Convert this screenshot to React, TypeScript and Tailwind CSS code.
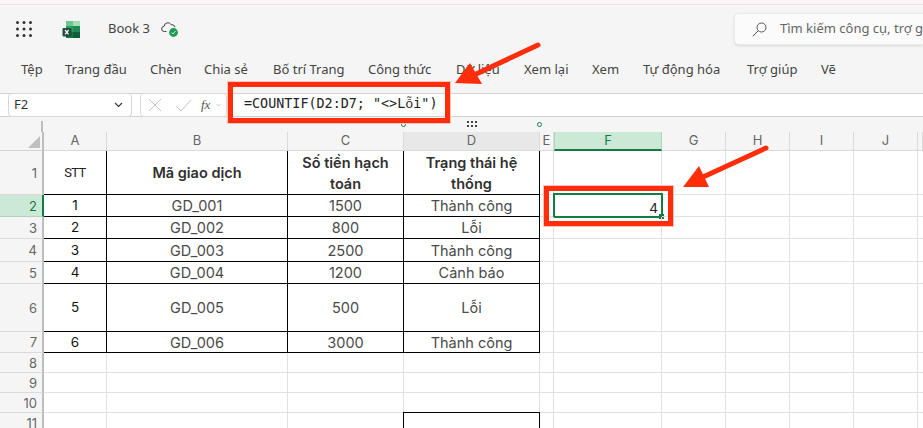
import React from "react";

const colW = [63, 181, 116, 136, 14, 108, 64, 64, 64, 64, 5];
const colN = ["A", "B", "C", "D", "E", "F", "G", "H", "I", "J", ""];
const rowH = [44, 22, 22, 23, 22, 48, 21, 20, 20, 20, 20];

const data: Record<number, string[]> = {
  1: ["STT", "Mã giao dịch", "Số tiền hạch toán", "Trạng thái hệ thống"],
  2: ["1", "GD_001", "1500", "Thành công"],
  3: ["2", "GD_002", "800", "Lỗi"],
  4: ["3", "GD_003", "2500", "Thành công"],
  5: ["4", "GD_004", "1200", "Cảnh báo"],
  6: ["5", "GD_005", "500", "Lỗi"],
  7: ["6", "GD_006", "3000", "Thành công"],
};

const menu = [
  { t: "Tệp", c: "w-[44px]" },
  { t: "Trang đầu", c: "w-[85px]" },
  { t: "Chèn", c: "w-[54px]" },
  { t: "Chia sẻ", c: "w-[69px]" },
  { t: "Bố trí Trang", c: "w-[95px]" },
  { t: "Công thức", c: "w-[88px]" },
  { t: "Dữ liệu", c: "w-[68px]" },
  { t: "Xem lại", c: "w-[68px]" },
  { t: "Xem", c: "w-[51px]" },
  { t: "Tự động hóa", c: "w-[104px]" },
  { t: "Trợ giúp", c: "w-[74px]" },
  { t: "Vẽ", c: "w-[30px]" },
];

function Waffle() {
  return (
    <svg width="16" height="16" viewBox="0 0 16 16" fill="#333">
      {[1.5, 8, 14.5].map((y) => [1.5, 8, 14.5].map((x) => <circle key={`${x}-${y}`} cx={x} cy={y} r="1.5" />))}
    </svg>
  );
}

function ExcelLogo() {
  return (
    <svg width="19" height="19" viewBox="0 0 19 19">
      <rect x="4" y="1" width="14" height="17" rx="1.5" fill="#21a366" />
      <rect x="11" y="1" width="7" height="5" fill="#a5dcb4" />
      <rect x="4" y="1" width="7" height="5" fill="#6cc48f" />
      <rect x="11" y="6" width="7" height="6" fill="#1d8a55" />
      <rect x="11" y="12" width="7" height="6" fill="#0d5f37" />
      <rect x="4" y="12" width="7" height="6" fill="#107c41" />
      <rect x="0.5" y="8" width="9" height="8.5" rx="1" fill="#27483a" />
      <path d="M3 10l3.6 4.4M6.6 10L3 14.4" stroke="#fff" strokeWidth="1.2" />
    </svg>
  );
}

function CloudOk() {
  return (
    <svg width="18" height="18" viewBox="0 0 18 18" fill="none">
      <path d="M5.5 11.5H3.4a2.6 2.6 0 0 1-.3-5.2 3.8 3.8 0 0 1 7.1-1.6 3 3 0 0 1 3.6 2.6" stroke="#444" strokeWidth="1" />
      <circle cx="12.5" cy="12.5" r="4.4" fill="#1f9a55" />
      <path d="M10.4 12.5l1.5 1.5 2.7-3" stroke="#dff5e6" strokeWidth="1" />
    </svg>
  );
}

function SearchGlyph() {
  return (
    <svg width="15" height="15" viewBox="0 0 15 15" fill="none" className="shrink-0">
      <circle cx="9.5" cy="5.5" r="4.5" stroke="#555" strokeWidth="1" />
      <path d="M6.2 8.8L0.8 14.2" stroke="#555" strokeWidth="1" />
    </svg>
  );
}

function Chevron() {
  return (
    <svg width="9" height="6" viewBox="0 0 9 6" fill="none">
      <path d="M1 1l3.5 3.5L8 1" stroke="#333" strokeWidth="1.1" />
    </svg>
  );
}

function Dots() {
  return (
    <svg width="11" height="7" viewBox="0 0 11 7" fill="#444">
      {[0, 4, 8].map((x) => [0, 4].map((y) => <rect key={`${x}-${y}`} x={x} y={y} width="2" height="2" />))}
    </svg>
  );
}

function Cell({ r, c }: { r: number; c: number }) {
  const inTable = r <= 7 && c <= 3;
  const d11 = r === 11 && c === 3;
  const text = inTable ? data[r][c] : "";
  const selected = r === 2 && c === 5;
  const bold = r === 1 && c >= 1;
  const first = c === 0;
  let cls = "relative flex items-center justify-center text-center leading-[21px] px-1 border-r border-b ";
  cls += inTable ? "border-black " : "border-[#e1e1e1] ";
  if (d11) cls += "border-t border-l !border-black -mt-px -ml-px ";
  cls += bold
    ? "font-['Inter',sans-serif] font-semibold text-[14.5px] text-[#303030] "
    : first && r === 1
      ? "font-['Roboto',sans-serif] text-[13px] tracking-[-0.6px] text-[#222] "
      : first
        ? "font-['Inter',sans-serif] text-[13.5px] text-[#111] "
        : "font-['Inter',sans-serif] text-[14.5px] text-[#4a4a4a] ";
  return (
    <div className={cls}>
      {text}
      {selected && (
        <div className="absolute -left-px -top-[2px] w-[110px] h-[25px] border-2 border-[#137c43] text-right pr-[3px] font-['Inter',sans-serif] text-[13.5px] leading-[26px] text-[#222]">
          4
          <div className="absolute left-[104px] top-[19px] w-[5px] h-[5px] bg-[#137c43]" />
        </div>
      )}
    </div>
  );
}

export default function App() {
  return (
    <div className="relative w-[923px] h-[428px] overflow-hidden bg-white font-['Noto_Sans',sans-serif]">
      <div className="h-[5px] bg-[#fdf5f8] border-b border-[#f6dfe8]" />
      {/* title bar */}
      <div className="bg-[#f5f5f5] h-[89px] border-b border-[#d2d2d2] flex flex-col">
        <div className="h-[48px] shrink-0 flex items-center pl-[16px]">
          <Waffle />
          <div className="ml-[30px]"><ExcelLogo /></div>
          <span className="ml-[27px] text-[13px] text-[#444]">Book 3</span>
          <div className="ml-[11px]"><CloudOk /></div>
          <div className="ml-auto w-[189px] h-[32px] bg-[#fbfbfb] rounded-l-[5px] border border-r-0 border-[#ececec] flex items-center pl-[17px] shadow-sm overflow-hidden whitespace-nowrap">
            <SearchGlyph />
            <span className="ml-[13px] text-[13px] text-[#666]">Tìm kiếm công cụ, trợ giúp</span>
          </div>
        </div>
        <div className="flex items-center h-[24px] mt-[5px] pl-[21px] text-[13px] text-[#444] whitespace-nowrap">
          {menu.map((m) => <span key={m.t} className={m.c + " shrink-0"}>{m.t}</span>)}
        </div>
      </div>
      {/* formula bar */}
      <div className="h-[23px] flex items-center pl-[8px] border-b border-[#d2d2d2] bg-white">
        <div className="w-[124px] h-[24px] border border-[#d8d8d8] rounded-[4px] bg-white flex items-center justify-between pl-[5px] pr-[8px] text-[13px] text-[#333]">
          <span>F2</span>
          <Chevron />
        </div>
        <div className="ml-[8px] w-[87px] h-[24px] border border-[#dcdcdc] rounded-[4px] bg-white flex items-center pl-[7px]">
          <svg width="14" height="14" viewBox="0 0 14 14" fill="none" stroke="#c4c4c4" strokeWidth="1">
            <path d="M1 1l12 12M13 1L1 13" />
          </svg>
          <svg width="17" height="13" viewBox="0 0 17 13" fill="none" stroke="#c4c4c4" strokeWidth="1" className="ml-[13px]">
            <path d="M1 7l5 5L16 1" />
          </svg>
          <span className="ml-[9px] font-['Liberation_Serif',serif] italic text-[13px] text-[#555]">fx</span>
          <svg width="5" height="4" viewBox="0 0 5 4" fill="none" stroke="#bbb" strokeWidth="0.8" className="ml-[6px]">
            <path d="M0.5 1l2 2 2-2" />
          </svg>
        </div>
        <div className="ml-[8px] font-['DejaVu_Sans_Mono',monospace] text-[13.4px] pl-[9px] text-[#222] whitespace-nowrap">
          =COUNTIF(D2:D7; "&lt;&gt;L<span className="font-['Liberation_Mono',monospace]">ỗ</span>i")
        </div>
      </div>
      {/* divider strip */}
      <div className="h-[15px] bg-[#f5f5f5] flex items-center justify-center relative">
        <div className="ml-[21px]"><Dots /></div>
        <span className="absolute left-[41px] top-[4px] w-[2px] h-[11px] bg-[#bdbdbd]" />
        <span className="absolute left-[401px] top-[5px] w-[5px] h-[5px] rounded-full border border-[#137c43] bg-white" />
        <span className="absolute left-[537px] top-[5px] w-[5px] h-[5px] rounded-full border border-[#137c43] bg-white" />
      </div>
      {/* sheet */}
      <div
        className="grid text-[#666] font-['Inter',sans-serif]"
        style={{
          gridTemplateColumns: `44px ${colW.map((w) => w + "px").join(" ")}`,
          gridTemplateRows: `19px ${rowH.map((h) => h + "px").join(" ")}`,
        }}
      >
        <div className="relative bg-[#f5f5f5] border-r-2 border-[#bdbdbd] border-b border-b-[#d4d4d4]">
          <div className="absolute right-[2px] bottom-[2px] w-0 h-0 border-l-[12px] border-l-transparent border-b-[12px] border-b-[#c0c0c0]" />
        </div>
        {colN.map((n) =>
          n === "F" ? (
            <div key={n} className="bg-[#cbe9d6] border-b-2 border-b-[#137c43] border-x border-x-[#a9d8bb] flex items-center justify-center text-[13px] text-[#137c43]">{n}</div>
          ) : (
            <div key={n + "h"} className={(n === "D" ? "bg-[#e8e8e8] " : "bg-[#f5f5f5] ") + "border-r border-b border-[#dadada] flex items-center justify-center text-[13px] text-[#666]"}>{n}</div>
          )
        )}
        {rowH.map((_, i) => {
          const r = i + 1;
          return (
            <React.Fragment key={r}>
              <div className={(r === 2 ? "bg-[#cbe9d6] text-[#137c43] border-r-2 border-r-[#137c43] border-b-[#a9d8bb] " : "bg-[#f5f5f5] text-[#666] border-r-2 border-r-[#bdbdbd] border-b-[#dadada] ") + "border-b flex items-center justify-end pr-[5px] pt-[2px] text-[13px]"}>{r}</div>
              {colW.map((_, c) => <Cell key={c} r={r} c={c} />)}
            </React.Fragment>
          );
        })}
      </div>
      {/* annotations */}
      <div className="absolute left-[228px] top-[82px] w-[222px] h-[41px] border-[5px] border-[#ff2d0a] ring-1 ring-[#ffc4b8]" />
      <div className="absolute left-[544px] top-[186px] w-[129px] h-[40px] border-[5px] border-[#ff2d0a] ring-1 ring-[#ffc4b8]" />
      <svg className="absolute left-0 top-0" width="923" height="428" fill="none">
        <path d="M538 45L474 75" stroke="#ff2d0a" strokeWidth="5" strokeLinecap="round" />
        <path d="M455 83L470 63L482 84Z" fill="#ff2d0a" />
        <path d="M766 148L703 177" stroke="#ff2d0a" strokeWidth="5" strokeLinecap="round" />
        <path d="M683 187L699 166L709 187Z" fill="#ff2d0a" />
      </svg>
    </div>
  );
}
